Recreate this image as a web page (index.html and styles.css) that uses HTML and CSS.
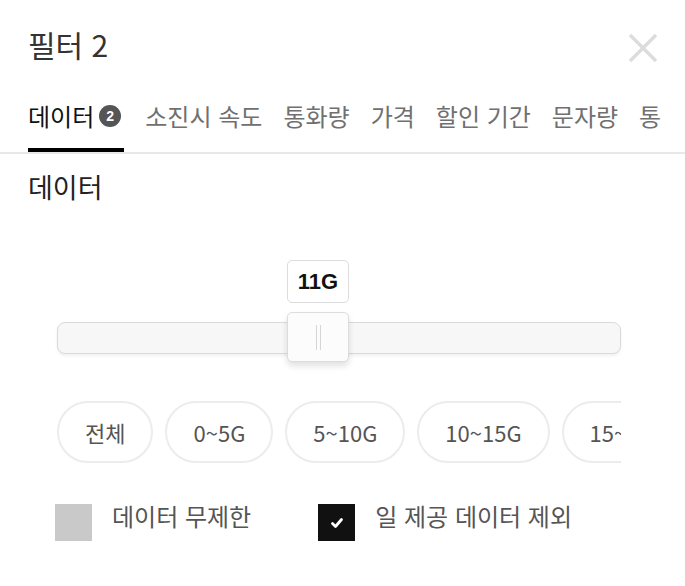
FILE: index.html
```html
<!DOCTYPE html>
<html lang="ko">

<head>
    <meta charset="UTF-8">
    <meta name="viewport" content="width=device-width, initial-scale=1.0">
    <title>필터</title>
    <link rel="stylesheet" href="styles.css">
</head>

<body>
    <div id="sheet">
        <div class="header">
            <h1 class="title">필터 2</h1>
            <a href="javascript:;" class="close" aria-label="닫기">
                <svg width="30" height="30" viewBox="0 0 30 30">
                    <path d="M2 2 L28 28 M28 2 L2 28" stroke="#dcdcdc" stroke-width="3.4" fill="none" />
                </svg>
            </a>
        </div>

        <div class="tab-bar">
            <div class="tabs">
                <span class="tab on">데이터<i class="badge">2</i></span>
                <span class="tab">소진시 속도</span>
                <span class="tab">통화량</span>
                <span class="tab">가격</span>
                <span class="tab">할인 기간</span>
                <span class="tab">문자량</span>
                <span class="tab">통신사</span>
            </div>
        </div>

        <h2 class="section-title">데이터</h2>

        <div class="slider">
            <div class="track"></div>
            <div class="handle" style="left: calc((100% - 62px) * 0.4582)">
                <div class="tip">11G</div>
                <div class="thumb"><span></span></div>
            </div>
        </div>

        <div class="chips">
            <span class="chip">전체</span>
            <span class="chip">0~5G</span>
            <span class="chip">5~10G</span>
            <span class="chip">10~15G</span>
            <span class="chip">15~30G</span>
            <span class="chip">30G 이상</span>
        </div>

        <div class="checks">
            <label class="check">
                <span class="box"></span>
                <span class="label">데이터 무제한</span>
            </label>
            <label class="check">
                <span class="box checked">
                    <svg width="14" height="12" viewBox="0 0 14 12">
                        <path d="M2.5 6.5 L5.5 9.5 L11.5 2.5" stroke="#fff" stroke-width="2.8" fill="none"
                            stroke-linecap="round" stroke-linejoin="round" />
                    </svg>
                </span>
                <span class="label">일 제공 데이터 제외</span>
            </label>
        </div>
    </div>
</body>

</html>
```

FILE: styles.css
```css
body {
    margin: 0;
    background: #fff;
    font-family: "Noto Sans CJK KR", "Noto Sans", sans-serif;
    color: #222;
}

#sheet {
    width: 685px;
    height: 586px;
    overflow: hidden;
}

.header {
    display: flex;
    justify-content: space-between;
    align-items: flex-start;
    padding: 24px 27px 0 28px;
}

.title {
    margin: 0;
    font-size: 30px;
    font-weight: 400;
    line-height: 40px;
    color: #333;
}

.close {
    display: block;
    margin-top: 9px;
    width: 30px;
    height: 30px;
}

.tab-bar {
    margin-top: 31px;
    padding-left: 28px;
    border-bottom: 2px solid #e8e8e8;
}

.tabs {
    display: flex;
    gap: 21px;
    margin-right: 24px;
    padding-top: 6px;
    white-space: nowrap;
    overflow: hidden;
}

.tab {
    display: flex;
    align-items: center;
    flex-shrink: 0;
    padding-bottom: 17px;
    font-size: 24px;
    line-height: 30px;
    color: #707070;
    border-bottom: 4px solid transparent;
}

.tab.on {
    color: #111;
    border-bottom-color: #000;
}

.badge {
    display: inline-flex;
    align-items: center;
    justify-content: center;
    width: 22px;
    height: 22px;
    margin-left: 5px;
    margin-right: 3px;
    border-radius: 50%;
    background: #555;
    color: #fff;
    font-family: "Liberation Sans", sans-serif;
    font-style: normal;
    font-weight: bold;
    font-size: 14px;
    line-height: 1;
}

.section-title {
    margin: 16px 0 0 28px;
    font-size: 27px;
    font-weight: 400;
    line-height: 34px;
    color: #222;
}

.slider {
    position: relative;
    box-sizing: border-box;
    width: 564px;
    height: 102px;
    margin: 56px 0 0 57px;
    padding-top: 62px;
}

.track {
    height: 30px;
    border: 1px solid #dadada;
    border-radius: 8px;
    background: #f7f7f7;
    box-shadow: 0 2px 3px rgba(0, 0, 0, .06);
}

.handle {
    position: absolute;
    top: 0;
    width: 62px;
}

.tip {
    box-sizing: border-box;
    height: 43px;
    border: 1px solid #dcdcdc;
    border-radius: 5px;
    background: #fff;
    text-align: center;
    font-family: "Liberation Sans", Arial, sans-serif;
    font-weight: bold;
    font-size: 22px;
    line-height: 41px;
    color: #111;
}

.thumb {
    box-sizing: border-box;
    position: relative;
    margin-top: 9px;
    height: 50px;
    border: 1px solid #dcdcdc;
    border-radius: 5px;
    background: #fcfcfc;
    box-shadow: 0 4px 6px rgba(0, 0, 0, .12);
}

.thumb span {
    position: absolute;
    left: 28px;
    top: 12px;
    width: 3px;
    height: 25px;
    border-left: 1px solid #d6d6d6;
    border-right: 1px solid #d6d6d6;
}

.chips {
    display: flex;
    gap: 12px;
    width: 564px;
    margin: 39px 0 0 57px;
    overflow: hidden;
}

.chip {
    flex-shrink: 0;
    box-sizing: border-box;
    height: 62px;
    padding: 0 26px;
    border: 2px solid #ececec;
    border-radius: 31px;
    font-size: 22px;
    font-variant-numeric: proportional-nums;
    line-height: 58px;
    color: #555;
    white-space: nowrap;
}

.checks {
    display: flex;
    gap: 67px;
    margin: 38px 0 0 55px;
}

.check {
    display: flex;
    align-items: flex-start;
    gap: 20px;
}

.box {
    display: flex;
    align-items: center;
    justify-content: center;
    width: 37px;
    height: 37px;
    margin-top: 3px;
    background: #c9c9c9;
}

.box.checked {
    background: #111;
}

.label {
    font-size: 24px;
    line-height: 30px;
    color: #555;
    white-space: nowrap;
}
```
